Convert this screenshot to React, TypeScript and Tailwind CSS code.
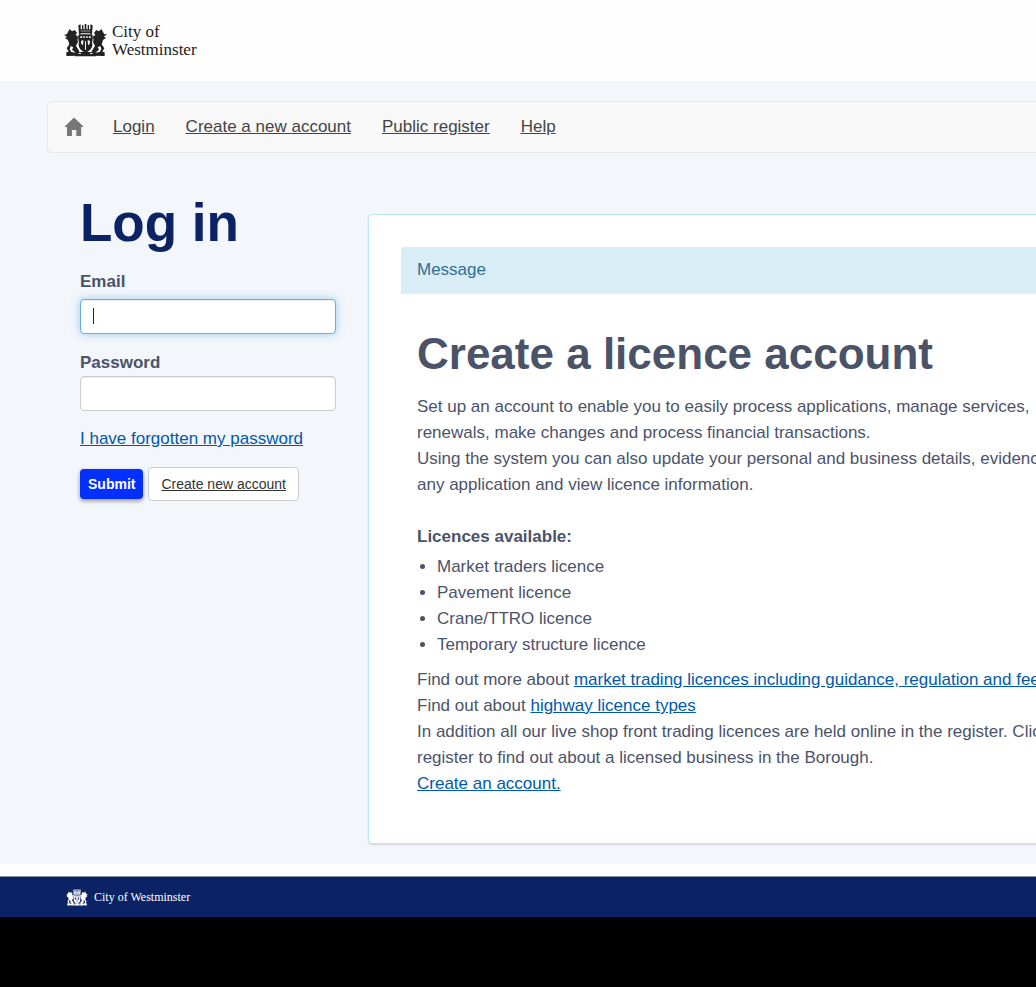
import React from "react";

function Crest({ className, cut }: { className: string; cut: string }) {
  return (
    <svg viewBox="0 0 129 99" className={className} aria-hidden="true" fill="currentColor">
      <path d="M0 33 L8 31 L12 24 L17 15 L24 22 L32 18 L39 26 L35 33 L43 38 L42 56 L36 65 L46 81 L40 95 L7 96 L7 85 L14 83 L8 73 L16 61 L12 48 L3 42 L9 38 Z" />
      <path d="M129 30 L121 31 L117 24 L112 15 L105 22 L97 18 L90 26 L94 33 L86 38 L87 56 L93 65 L83 81 L89 95 L122 96 L122 85 L115 83 L121 73 L113 61 L117 48 L126 42 L120 38 Z" />
      <path d="M36 84 H93 L96 97 H33 Z" />
      <path d="M43 33 H86 V57 C86 73 77 81 64 87 C52 81 43 73 43 57 Z" />
      <path d="M43 4 L50 1 V16 H54 V3 H58 V16 H62 V0 H67 V16 H71 V3 H75 V16 H79 V1 L86 4 L84 32 H45 Z" />
      <g fill={cut}>
        <path d="M49 37 H80 V42 H49 Z M51 51 L58 48 L57 64 L52 60 Z M71 48 L78 51 L77 60 L72 64 Z" />
        <path d="M63 52 H66 V77 H63 Z M50 20 H79 V22 H50 Z M50 27 H79 V29 H50 Z" />
        <path d="M20 66 L28 70 L24 77 L35 86 L22 84 L17 76 Z M109 66 L101 70 L105 77 L94 86 L107 84 L112 76 Z" />
        <path d="M39 40 L42 55 L37 65 L45 79 L52 83 L42 66 L45 55 Z M90 40 L87 55 L92 65 L84 79 L77 83 L87 66 L84 55 Z" />
        <path d="M44 86 L52 88 L50 90 L43 89 Z M85 86 L77 88 L79 90 L86 89 Z" />
      </g>
      <path d="M54 37 H58 V42 H54 Z M62 37 H67 V42 H62 Z M71 37 H75 V42 H71 Z" />
    </svg>
  );
}

const link = "text-[#005aab] underline";

export default function App() {
  return (
    <div className="min-h-screen overflow-hidden bg-black font-['Liberation_Sans',Arial,sans-serif] text-[17px] leading-[26px] text-[#4b5369]">
      <div className="bg-white pb-3">
        <header className="flex h-[81px] items-center bg-[#fefefe] px-16">
          <a href="#" className="flex items-center gap-[5px] text-[#222]">
            <Crest className="h-[33px] w-[43px]" cut="#fefefe" />
            <span className="font-['Liberation_Serif',serif] text-[17px] leading-[18px]">
              City of
              <br />
              Westminster
            </span>
          </a>
        </header>

        <main className="bg-[#f3f6fb] py-5 pl-[47px]">
          <nav className="flex h-[52px] min-w-[1170px] items-center gap-[29px] rounded-[5px] border border-[#e7e7e7] bg-[#f8f8f8] px-4 text-[#444]">
            <a href="#" aria-label="Home" className="text-[#777]">
              <svg viewBox="0 0 20 20" className="h-5 w-5" fill="currentColor" aria-hidden="true">
                <path d="M10 0.5 L20 10 H17.2 V19 H12.3 V13 H7.9 V19 H3 V10 H0.3 Z" />
              </svg>
            </a>
            <div className="flex gap-[31px]">
              <a href="#" className="underline">Login</a>
              <a href="#" className="underline">Create a new account</a>
              <a href="#" className="underline">Public register</a>
              <a href="#" className="underline">Help</a>
            </div>
          </nav>

          <div className="flex min-w-[1170px] items-start gap-8 pl-[33px]">
            <form className="w-64 shrink-0 pt-[38px]" onSubmit={(e) => e.preventDefault()}>
              <h1 className="text-[53px] leading-[64px] font-bold text-[#0b2265]">Log in</h1>
              <label htmlFor="email" className="mt-3.5 block font-bold">Email</label>
              <div className="relative mt-1">
                <input
                  id="email"
                  type="email"
                  className="block h-[35px] w-full rounded-[4px] border border-[#66afe9] bg-white px-3 text-[#555] caret-transparent shadow-[inset_0_1px_1px_rgba(0,0,0,0.075),0_0_8px_rgba(102,175,233,0.6)] outline-none"
                />
                <span className="pointer-events-none absolute top-[9px] left-[13px] h-4 w-px bg-[#222]" />
              </div>
              <label htmlFor="password" className="mt-4 block font-bold">Password</label>
              <input
                id="password"
                type="password"
                className="block h-[35px] w-full rounded-[4px] border border-[#ccc] bg-white px-3 shadow-[inset_0_1px_1px_rgba(0,0,0,0.075)] outline-none"
              />
              <a href="#" className={"mt-[15px] block " + link}>I have forgotten my password</a>
              <div className="mt-[15px] flex items-center gap-[5px]">
                <button
                  type="submit"
                  className="h-[30px] rounded-[4px] bg-[#0330ff] px-2 text-[14px] leading-5 font-bold text-white shadow-[0_2px_4px_rgba(0,0,0,0.4)]"
                >
                  Submit
                </button>
                <a href="#" className="rounded-[4px] border border-[#ccc] bg-white px-3 py-1.5 text-[14px] leading-5 text-[#333] underline">
                  Create new account
                </a>
              </div>
            </form>

            <section className="mt-[61px] grow rounded-[4px] border border-[#bce8f1] bg-white p-8 shadow-[0_1px_2px_rgba(0,0,0,0.12)]">
              <div className="rounded-t-[3px] bg-[#d9edf7] px-4 pt-2.5 pb-[11px] text-[#31708f]">Message</div>
              <div className="px-4 pt-8 pb-3.5 whitespace-nowrap">
                <h2 className="text-[44px] leading-[56px] font-bold">Create a licence account</h2>
                <p className="mt-3">
                  Set up an account to enable you to easily process applications, manage services,
                  <br />
                  renewals, make changes and process financial transactions.
                  <br />
                  Using the system you can also update your personal and business details, evidence for
                  <br />
                  any application and view licence information.
                </p>
                <h3 className="mt-[26px] font-bold">Licences available:</h3>
                <ul className="mt-1 list-disc pl-5">
                  <li>Market traders licence</li>
                  <li>Pavement licence</li>
                  <li>Crane/TTRO licence</li>
                  <li>Temporary structure licence</li>
                </ul>
                <p className="mt-[9px]">
                  Find out more about{" "}
                  <a href="#" className={link}>market trading licences including guidance, regulation and fees</a>
                  <br />
                  Find out about <a href="#" className={link}>highway licence types</a>
                  <br />
                  In addition all our live shop front trading licences are held online in the register. Click
                  <br />
                  register to find out about a licensed business in the Borough.
                  <br />
                  <a href="#" className={link}>Create an account.</a>
                </p>
              </div>
            </section>
          </div>
        </main>
      </div>

      <footer className="flex h-[41px] items-center gap-1.5 border-t border-[#8a8d99] bg-[#0b2265] px-[66px] text-white">
        <Crest className="h-[17px] w-[22px]" cut="#0b2265" />
        <span className="font-['Liberation_Serif',serif] text-[12px] leading-4">City of Westminster</span>
      </footer>
    </div>
  );
}
